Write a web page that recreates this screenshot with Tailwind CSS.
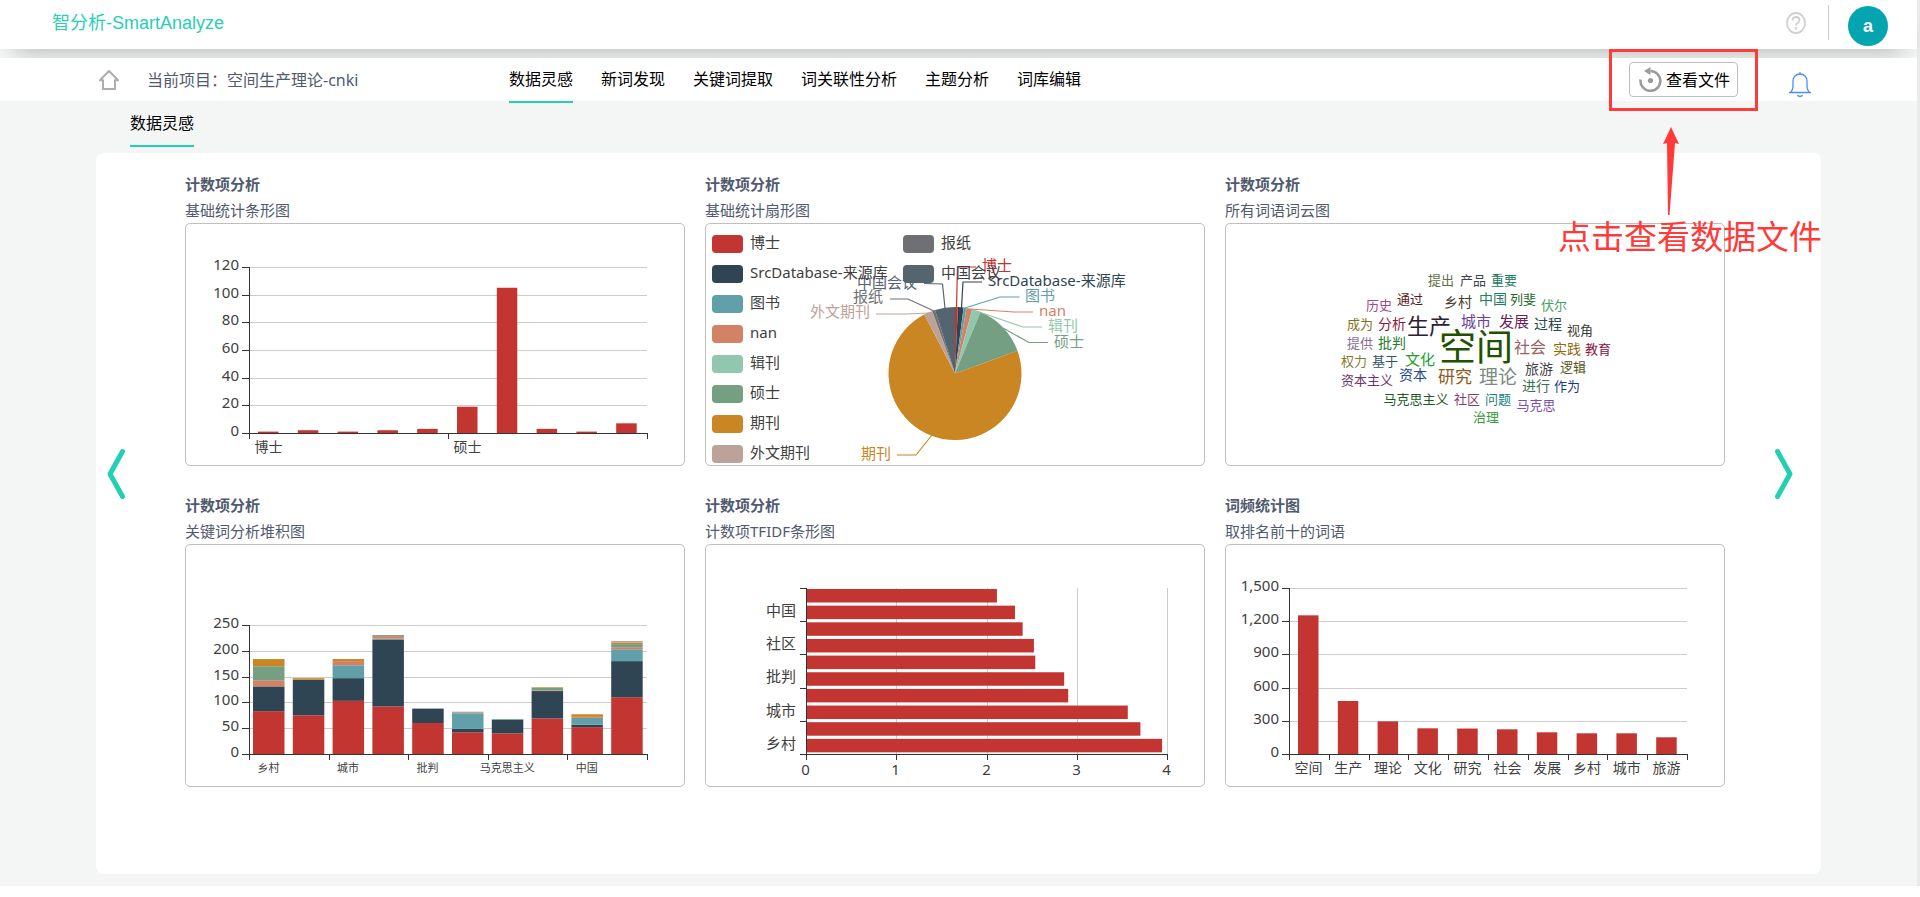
<!DOCTYPE html>
<html lang="zh-CN">
<head>
<meta charset="utf-8">
<meta name="viewport" content="width=device-width, initial-scale=1">
<title>智分析-SmartAnalyze</title>
<script src="https://cdn.jsdelivr.net/npm/@tailwindcss/browser@4"></script>
</head>
<body class="min-h-screen bg-white font-['Noto_Sans','Noto_Sans_CJK_SC',sans-serif] text-[#515a6e]">
<div class="border-r-3 border-[#e8ebea] bg-[#f4f6f5] pb-3">

  <header class="flex h-[49px] items-center bg-white pr-[29px] pl-[52px] shadow-[0_15px_25px_-15px_rgba(0,0,0,0.35)]">
    <a href="#" class="pb-1 font-['Liberation_Sans','Noto_Sans_CJK_SC',sans-serif] text-lg leading-6 text-[#26cfb2]">智分析-SmartAnalyze</a>
    <div class="ml-auto flex items-center">
      <button type="button" aria-label="帮助" class="pb-1">
        <svg class="h-[22px] w-5" viewBox="0 0 20 22" fill="none" stroke="#cfcfcf" stroke-width="1.8"><ellipse cx="10" cy="11" rx="9" ry="10"/><path d="M6.600 8.600C6.600 6.200 8 5 10 5s3.500 1.200 3.500 3.200c0 2.600-3.500 2.600-3.500 5.300" stroke-width="1.800"/><circle cx="10" cy="16.500" r=".5"/></svg>
      </button>
      <span class="mr-[19px] mb-1 ml-[22px] h-[35px] w-px bg-[#cccccc]"></span>
      <button type="button" class="mt-[3px] flex size-10 items-center justify-center rounded-full bg-[#04a4b1] font-['Liberation_Sans',sans-serif] text-lg font-bold text-white">a</button>
    </div>
  </header>

  <nav class="mt-[9px] flex h-[43px] items-center bg-white pr-[106px] pl-[99px]">
    <div class="flex w-[410px] shrink-0 items-center gap-7">
      <a href="#" aria-label="首页">
        <svg class="h-5 w-5" viewBox="0 0 20 20" fill="none" stroke="#adadad" stroke-width="2" stroke-linejoin="round" stroke-linecap="round"><path d="M1 10.300 10 1l9 9.300h-3V19H4v-8.700z"/></svg>
      </a>
      <span>当前项目：空间生产理论-cnki</span>
    </div>
    <div class="flex h-full items-start gap-7 leading-[43px] whitespace-nowrap text-black">
      <a href="#" class="h-[45px] border-b-2 border-[#22d0b2]">数据灵感</a>
      <a href="#">新词发现</a>
      <a href="#">关键词提取</a>
      <a href="#">词关联性分析</a>
      <a href="#">主题分析</a>
      <a href="#">词库编辑</a>
    </div>
    <div class="ml-auto flex items-center gap-[51px]">
      <div class="relative">
        <button type="button" class="flex h-[35px] w-[109px] items-center gap-1 rounded-sm border border-[#bdbdbd] bg-white pl-[9px] whitespace-nowrap text-black">
          <svg class="h-[25px] w-[23px] shrink-0" viewBox="0 0 23 25" fill="none"><path d="M1.600 12.500A9.900 9.900 0 1 0 11.500 4" stroke="#9b9b9b" stroke-width="2.600"/><path d="M5 4 11.500 0v8z" fill="#9b9b9b"/><circle cx="11.500" cy="13.500" r="2.600" fill="#9b9b9b"/></svg>
          查看文件
        </button>
        <div class="pointer-events-none absolute -inset-x-5 -top-[13px] -bottom-[14px] border-3 border-[#ff3a38]"></div>
        <svg class="pointer-events-none absolute top-[65px] left-[34px] z-10 h-[88px] w-4" viewBox="0 0 16 88" fill="#ff3a38"><path d="M8 0 16 17 12 16 6.500 88H5L4 16 0 17z"/></svg>
        <p class="pointer-events-none absolute top-[155px] -right-[84px] z-10 text-[33px] leading-10 whitespace-nowrap text-[#ff3a38]">点击查看数据文件</p>
      </div>
      <button type="button" aria-label="通知" class="mt-[11px]">
        <svg class="h-[26px] w-[22px]" viewBox="0 0 22 26" fill="none" stroke="#4a8df0" stroke-width="1.300"><path d="M1 20.500c2.500-1.500 3-4 3-7V9c0-4 3-7 7-7s7 3 7 7v4.500c0 3 .500 5.500 3 7zM8.500 23c1 2 4 2 5 0M11 0v2"/></svg>
      </button>
    </div>
  </nav>

  <div class="flex h-[52px] items-start pl-[130px] leading-[44px] text-black">
    <a href="#" class="border-b-2 border-[#22d0b2]">数据灵感</a>
  </div>

  <main class="mx-24 flex items-start rounded-lg bg-white pt-[18px] pb-[87px]">
    <button type="button" aria-label="上一页" class="mt-[278px] w-[89px] shrink-0 pl-[10px]">
      <svg class="h-[50px] w-5" viewBox="0 0 20 50" fill="none" stroke="#22d0b2" stroke-width="5" stroke-linecap="round" stroke-linejoin="round"><path d="M16.500 2.500 4 25l12.500 22.500"/></svg>
    </button>

    <div class="grid min-w-0 flex-1 grid-cols-3 gap-x-5 gap-y-[26px] text-[15px] leading-[26px]">
      <section>
        <h2 class="font-bold">计数项分析</h2>
        <p>基础统计条形图</p>
        <div class="rounded-[5px] border border-[#bfbfbf]"><svg id="count-bars" class="block h-auto w-full" viewBox="0 0 498 241"></svg></div>
      </section>
      <section>
        <h2 class="font-bold">计数项分析</h2>
        <p>基础统计扇形图</p>
        <div class="rounded-[5px] border border-[#bfbfbf]"><svg id="pie" class="block h-auto w-full" viewBox="0 0 498 241"></svg></div>
      </section>
      <section>
        <h2 class="font-bold">计数项分析</h2>
        <p>所有词语词云图</p>
        <div class="rounded-[5px] border border-[#bfbfbf]"><svg id="cloud" class="block h-auto w-full" viewBox="0 0 498 241"></svg></div>
      </section>
      <section>
        <h2 class="font-bold">计数项分析</h2>
        <p>关键词分析堆积图</p>
        <div class="rounded-[5px] border border-[#bfbfbf]"><svg id="stack" class="block h-auto w-full" viewBox="0 0 498 241"></svg></div>
      </section>
      <section>
        <h2 class="font-bold">计数项分析</h2>
        <p>计数项TFIDF条形图</p>
        <div class="rounded-[5px] border border-[#bfbfbf]"><svg id="tfidf" class="block h-auto w-full" viewBox="0 0 498 241"></svg></div>
      </section>
      <section>
        <h2 class="font-bold">词频统计图</h2>
        <p>取排名前十的词语</p>
        <div class="rounded-[5px] border border-[#bfbfbf]"><svg id="freq" class="block h-auto w-full" viewBox="0 0 498 241"></svg></div>
      </section>
    </div>

    <button type="button" aria-label="下一页" class="mt-[278px] flex w-24 shrink-0 justify-end pr-[27px]">
      <svg class="h-[50px] w-5" viewBox="0 0 20 50" fill="none" stroke="#22d0b2" stroke-width="5" stroke-linecap="round" stroke-linejoin="round"><path d="M3.500 2.500 16 25 3.500 47.500"/></svg>
    </button>
  </main>
</div>

<script>
const palette = ['#c23531','#2f4554','#61a0a8','#d48265','#91c7ae','#749f83','#ca8622','#bda29a','#6e7074','#546570'];
const line = (x1, y1, x2, y2, c) => `<line x1="${x1}" y1="${y1}" x2="${x2}" y2="${y2}" stroke="${c}" stroke-width="1" shape-rendering="crispEdges"/>`;
const rect = (x, y, w, h, c, r = 0) => `<rect x="${x}" y="${y}" width="${w}" height="${h}" rx="${r}" fill="${c}"/>`;
// y is the vertical middle of the glyphs
const text = (s, x, y, size, anchor = 'start', c = '#404040') => `<text x="${x}" y="${Math.round(y + size * 0.38) - (size < 20 ? 1 : 0)}" font-size="${size}" text-anchor="${anchor}" fill="${c}">${s}</text>`;
const put = (id, s) => { document.getElementById(id).innerHTML = s; };

const L = 63, R = 461, B = 209, BAND = (R - L) / 10;

function frame(top, ticks, labels, every, size) {
  let s = '';
  ticks.forEach((t, i) => {
    const y = Math.round(B - (B - top) * i / (ticks.length - 1)) + 0.5;
    if (i) s += line(L, y, R, y, '#ccc');
    s += line(L - 7, y, L, y, '#333') + text(t, 53, y - 2, 15, 'end');
  });
  for (let i = 0; i <= 10; i += every) {
    const x = Math.round(L + BAND * i) + 0.5;
    s += line(x, B, x, B + 6, '#333');
  }
  labels.forEach((t, i) => { s += text(t, L + BAND * (i * every + 0.5) - 0.5, 224, size, 'middle'); });
  return s;
}
const axes = top => line(L + 0.5, top, L + 0.5, B + 1, '#333') + line(L, B + 0.5, R + 1, B + 0.5, '#333');

function simpleBars(values, max) {
  return values.map((v, i) => rect(L + 9 + BAND * i, B - v * 166 / max, 20.5, v * 166 / max, palette[0])).join('');
}
put('count-bars', frame(43, ['0','20','40','60','80','100','120'], ['博士','硕士'], 5, 14)
  + simpleBars([1,2,1,2,3,19,105,3,1,7], 120) + axes(43));
put('freq', frame(43, ['0','300','600','900','1,200','1,500'], ['空间','生产','理论','文化','研究','社会','发展','乡村','城市','旅游'], 1, 14)
  + simpleBars([1253,479,295,232,230,223,196,187,187,151], 1500) + axes(43));

// Each bar: [palette index, value] from the bottom up
const stacks = [
  [[0,83],[1,48],[3,12],[5,27],[6,14]],
  [[0,75],[1,69],[6,3]],
  [[0,103],[1,44],[2,25],[3,8],[6,4]],
  [[0,92],[1,130],[2,1.5],[3,5],[5,2]],
  [[0,60],[1,28]],
  [[0,42],[1,7],[2,30],[7,3]],
  [[0,40],[1,27],[4,1]],
  [[0,69],[1,53],[3,1.5],[5,5],[6,1]],
  [[0,52],[1,5],[2,13],[3,2],[6,5]],
  [[0,110],[1,70],[2,23],[3,4],[5,6],[6,3],[7,3]]
];
let bars = '';
stacks.forEach((b, i) => {
  let y = B;
  b.forEach(([c, v]) => { const h = v * 129 / 250; y -= h; bars += rect(L + 4 + BAND * i, y, 31.5, h, palette[c]); });
});
put('stack', frame(80, ['0','50','100','150','200','250'], ['乡村','城市','批判','马克思主义','中国'], 2, 11) + bars + axes(80));

// Horizontal TF-IDF bars
let h = '';
for (let i = 0; i <= 4; i++) {
  const x = Math.round(100 + i * 90.25) + 0.5;
  if (i) h += line(x, 43, x, B, '#ccc');
  h += line(x, B, x, B + 6, '#333') + text(i, x - 1, 225, 15, 'middle');
}
[2.11,2.31,2.395,2.52,2.535,2.855,2.9,3.56,3.7,3.94].forEach((v, i) => { h += rect(100.5, 44 + i * 16.65, v * 90.25, 13.5, palette[0]); });
for (let i = 0; i <= 5; i++) { const y = Math.round(43 + i * 33.2) + 0.5; h += line(94, y, 101, y, '#333'); }
['中国','社区','批判','城市','乡村'].forEach((t, i) => { h += text(t, 90, 66 + i * 33.3, 15, 'end'); });
h += line(100.5, 43, 100.5, B + 1, '#333') + line(100, B + 0.5, 462, B + 0.5, '#333');
put('tfidf', h);

// Pie with leader lines and legend
const names = ['博士','SrcDatabase-来源库','图书','nan','辑刊','硕士','期刊','外文期刊','报纸','中国会议'];
const counts = [1,2,1,2,3,19,105,3,1,7];
let p = '', a = 0;
const point = ang => [249 + 66.5 * Math.sin(ang), 149.5 - 66.5 * Math.cos(ang)].map(n => n.toFixed(2)).join(' ');
counts.forEach((v, i) => {
  const a2 = a + v / 144 * 2 * Math.PI;
  p += `<path d="M249 149.500L${point(a)}A66.500 66.500 0 ${v > 72 ? 1 : 0} 1 ${point(a2)}Z" fill="${palette[i]}"/>`;
  a = a2;
});
[
  ['250.500,83 251.500,43 270,43', 276, 42, 'start'],
  ['255.500,84 257,58 276,58', 282, 57, 'start'],
  ['259,84 294,73 313.500,73', 319, 72, 'start'],
  ['264,85 308,88 327,88', 333, 87, 'start'],
  ['270.500,87 317,103 336,103', 342, 102, 'start'],
  ['297,104 323,118.500 342,118.500', 348, 118, 'start'],
  ['226,211 210,231 191,231', 185, 230, 'end'],
  ['223,89 201,90 170,90', 164, 88, 'end'],
  ['228,87 202,75 184,75', 177, 73, 'end'],
  ['239,84 236.500,60 218,59.500', 211, 59, 'end']
].forEach(([pts, x, y, anchor], i) => {
  p += `<polyline points="${pts}" fill="none" stroke="${palette[i]}" stroke-width="1.2"/>` + text(names[i], x, y, 15, anchor, palette[i]);
});
names.forEach((n, i) => {
  const x = i < 8 ? 6 : 197, y = 11 + (i % 8) * 30;
  p += rect(x, y, 31, 18, palette[i], 4) + text(n, x + 38, y + 8, 15);
});
put('pie', p);

// Word cloud: word, centre x, centre y, size, colour
put('cloud', [
  ['提出',215,57,13,'#5f7040'],['产品',247,57,13,'#3a4050'],['重要',278,57,13,'#1a7a5a'],
  ['历史',153,82,13,'#a04a80'],['通过',184,76,13,'#5a1a1a'],['乡村',232,79,14,'#4a3a2a'],
  ['中国',267,76,14,'#1f8060'],['列斐',297,76,13,'#1a6a1a'],['伏尔',328,82,13,'#4aa060'],
  ['成为',134,101,13,'#85701f'],['分析',166,101,14,'#8a1a3a'],['生产',203,102,22,'#2a2035'],
  ['城市',250,98,15,'#6a3fa0'],['发展',288,98,15,'#6a1f5a'],['过程',322,101,14,'#2a4a4a'],
  ['视角',354,107,13,'#3a3a3a'],['空间',250,123,37,'#1f5200'],['提供',134,120,13,'#8a6f95'],
  ['批判',166,120,14,'#1f8030'],['社会',304,124,16,'#9a5f65'],['实践',341,126,14,'#8f6a10'],
  ['教育',372,126,13,'#8a1045'],['权力',128,138,13,'#857a30'],['基于',159,138,13,'#2f5565'],
  ['文化',194,136,15,'#20a030'],['旅游',313,146,14,'#3f4550'],['逻辑',347,144,13,'#55551a'],
  ['资本主义',141,157,13,'#6a3570'],['资本',187,152,14,'#1a4a8a'],['研究',229,154,17,'#8a5a1a'],
  ['理论',272,154,19,'#7a8a80'],['进行',310,163,14,'#3f6f55'],['作为',341,163,13,'#1a3a80'],
  ['马克思主义',190,176,13,'#1f5a1f'],['社区',241,176,13,'#8a3f6a'],['问题',272,176,13,'#158080'],
  ['马克思',310,182,13,'#7a4fa8'],['治理',260,194,13,'#3a9a3a']
].map(([w, x, y, s, c]) => text(w, x, y, s, 'middle', c)).join(''));
</script>
</body>
</html>
